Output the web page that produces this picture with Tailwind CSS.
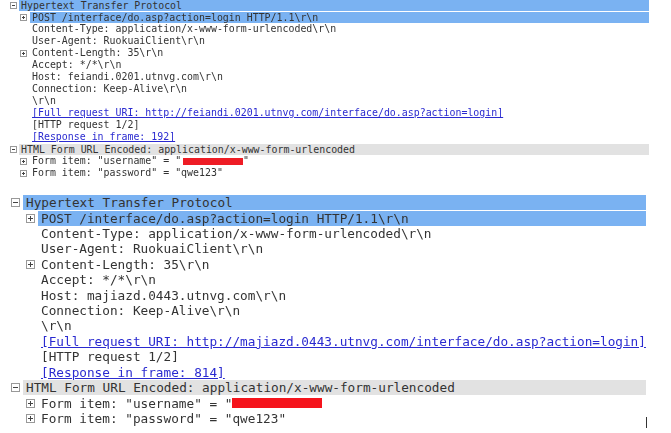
<!DOCTYPE html>
<html lang="en">
<head>
    <meta charset="UTF-8" />
    <title>Hypertext Transfer Protocol</title>
    <script src="https://cdn.jsdelivr.net/npm/@tailwindcss/browser@4"></script>
</head>
<body class="bg-white w-[671px] h-[433px] overflow-hidden relative font-['DejaVu_Sans_Mono',monospace] text-[#333]">
    <!-- Top capture -->
    <div class="w-[649px] text-[9.92px] leading-[12px] whitespace-nowrap blur-[0.3px]">
        <div class="flex items-end h-3 -mt-px">
            <svg class="w-[7px] h-[7px] ml-[10px] mr-[2px] mb-[2px] shrink-0" viewBox="0 0 7 7"><rect x=".5" y=".5" width="6" height="6" fill="#fff" stroke="#999"/><path d="M2 3.5h3" stroke="#444"/></svg>
            <div class="flex-1 bg-[#7ab2f2] pl-[2px] h-[11px] leading-[11px]">Hypertext Transfer Protocol</div>
        </div>
        <div class="flex items-end h-3">
            <svg class="w-[7px] h-[7px] ml-[20px] mr-[3px] mb-[2px] shrink-0" viewBox="0 0 7 7"><rect x=".5" y=".5" width="6" height="6" fill="#fff" stroke="#999"/><path d="M2 3.5h3M3.5 2v3" stroke="#444"/></svg>
            <div class="flex-1 bg-[#7ab2f2] pl-[2px] h-[11px] leading-[11px]">POST /interface/do.asp?action=login HTTP/1.1\r\n</div>
        </div>
        <div class="pl-[32px]">Content-Type: application/x-www-form-urlencoded\r\n</div>
        <div class="pl-[32px]">User-Agent: RuokuaiClient\r\n</div>
        <div class="flex items-center h-3">
            <svg class="w-[7px] h-[7px] ml-[20px] mr-[5px] shrink-0" viewBox="0 0 7 7"><rect x=".5" y=".5" width="6" height="6" fill="#fff" stroke="#999"/><path d="M2 3.5h3M3.5 2v3" stroke="#444"/></svg>
            <div>Content-Length: 35\r\n</div>
        </div>
        <div class="pl-[32px]">Accept: */*\r\n</div>
        <div class="pl-[32px]">Host: feiandi.0201.utnvg.com\r\n</div>
        <div class="pl-[32px]">Connection: Keep-Alive\r\n</div>
        <div class="pl-[32px]">\r\n</div>
        <div class="pl-[32px] text-[#2a2ad0] underline">[Full request URI: http://feiandi.0201.utnvg.com/interface/do.asp?action=login]</div>
        <div class="pl-[32px]">[HTTP request 1/2]</div>
        <div class="pl-[32px] text-[#2a2ad0] underline">[Response in frame: 192]</div>
        <div class="flex items-end h-3">
            <svg class="w-[7px] h-[7px] ml-[10px] mr-[2px] mb-[2px] shrink-0" viewBox="0 0 7 7"><rect x=".5" y=".5" width="6" height="6" fill="#fff" stroke="#999"/><path d="M2 3.5h3" stroke="#444"/></svg>
            <div class="flex-1 bg-[#e2e2e2] pl-[2px] h-[11px] leading-[11px]">HTML Form URL Encoded: application/x-www-form-urlencoded</div>
        </div>
        <div class="flex items-center h-3">
            <svg class="w-[7px] h-[7px] ml-[20px] mr-[5px] shrink-0" viewBox="0 0 7 7"><rect x=".5" y=".5" width="6" height="6" fill="#fff" stroke="#999"/><path d="M2 3.5h3M3.5 2v3" stroke="#444"/></svg>
            <div class="relative">Form item: "username" = "<span class="inline-block w-[62px]"></span>"<span class="absolute left-[151px] top-[3px] w-[60px] h-[7px] bg-[#ee1c25]"></span></div>
        </div>
        <div class="flex items-center h-3">
            <svg class="w-[7px] h-[7px] ml-[20px] mr-[5px] shrink-0" viewBox="0 0 7 7"><rect x=".5" y=".5" width="6" height="6" fill="#fff" stroke="#999"/><path d="M2 3.5h3M3.5 2v3" stroke="#444"/></svg>
            <div>Form item: "password" = "qwe123"</div>
        </div>
    </div>

    <!-- Bottom capture -->
    <div class="mt-4 w-[646px] text-[12.72px] leading-[15.43px] whitespace-nowrap blur-[0.3px]">
        <div class="flex items-center h-[15.43px]">
            <svg class="w-[9px] h-[9px] ml-[11px] mr-[3px] shrink-0" viewBox="0 0 9 9"><rect x=".5" y=".5" width="8" height="8" fill="#fff" stroke="#999"/><path d="M2 4.5h5" stroke="#444"/></svg>
            <div class="flex-1 bg-[#7ab2f2] pl-[3px] h-[15px] leading-[15px]">Hypertext Transfer Protocol</div>
        </div>
        <div class="flex items-center h-[15.43px]">
            <svg class="w-[9px] h-[9px] ml-[26px] mr-[3px] shrink-0" viewBox="0 0 9 9"><rect x=".5" y=".5" width="8" height="8" fill="#fff" stroke="#999"/><path d="M2 4.5h5M4.5 2v5" stroke="#444"/></svg>
            <div class="flex-1 bg-[#7ab2f2] pl-[3px] h-[15px] leading-[15px]">POST /interface/do.asp?action=login HTTP/1.1\r\n</div>
        </div>
        <div class="pl-[41px]">Content-Type: application/x-www-form-urlencoded\r\n</div>
        <div class="pl-[41px]">User-Agent: RuokuaiClient\r\n</div>
        <div class="flex items-center h-[15.43px]">
            <svg class="w-[9px] h-[9px] ml-[26px] mr-[6px] shrink-0" viewBox="0 0 9 9"><rect x=".5" y=".5" width="8" height="8" fill="#fff" stroke="#999"/><path d="M2 4.5h5M4.5 2v5" stroke="#444"/></svg>
            <div>Content-Length: 35\r\n</div>
        </div>
        <div class="pl-[41px]">Accept: */*\r\n</div>
        <div class="pl-[41px]">Host: majiazd.0443.utnvg.com\r\n</div>
        <div class="pl-[41px]">Connection: Keep-Alive\r\n</div>
        <div class="pl-[41px]">\r\n</div>
        <div class="pl-[41px] text-[#2a2ad0] underline">[Full request URI: http://majiazd.0443.utnvg.com/interface/do.asp?action=login]</div>
        <div class="pl-[41px]">[HTTP request 1/2]</div>
        <div class="pl-[41px] text-[#2a2ad0] underline">[Response in frame: 814]</div>
        <div class="flex items-center h-[15.43px]">
            <svg class="w-[9px] h-[9px] ml-[11px] mr-[3px] shrink-0" viewBox="0 0 9 9"><rect x=".5" y=".5" width="8" height="8" fill="#fff" stroke="#999"/><path d="M2 4.5h5" stroke="#444"/></svg>
            <div class="flex-1 bg-[#e2e2e2] pl-[3px] h-[15px] leading-[15px]">HTML Form URL Encoded: application/x-www-form-urlencoded</div>
        </div>
        <div class="flex items-center h-[15.43px]">
            <svg class="w-[9px] h-[9px] ml-[26px] mr-[6px] shrink-0" viewBox="0 0 9 9"><rect x=".5" y=".5" width="8" height="8" fill="#fff" stroke="#999"/><path d="M2 4.5h5M4.5 2v5" stroke="#444"/></svg>
            <div class="relative">Form item: "username" = "<span class="inline-block w-[82px]"></span>"<span class="absolute left-[191px] top-[2px] w-[90px] h-[10px] bg-[#f5141c]"></span></div>
        </div>
        <div class="flex items-center h-[15.43px]">
            <svg class="w-[9px] h-[9px] ml-[26px] mr-[6px] shrink-0" viewBox="0 0 9 9"><rect x=".5" y=".5" width="8" height="8" fill="#fff" stroke="#999"/><path d="M2 4.5h5M4.5 2v5" stroke="#444"/></svg>
            <div>Form item: "password" = "qwe123"</div>
        </div>
    </div>

    <!-- text caret left in the screenshot -->
    <div class="absolute left-[646px] top-[417px] w-px h-[11px] bg-[#333]"></div>
</body>
</html>
